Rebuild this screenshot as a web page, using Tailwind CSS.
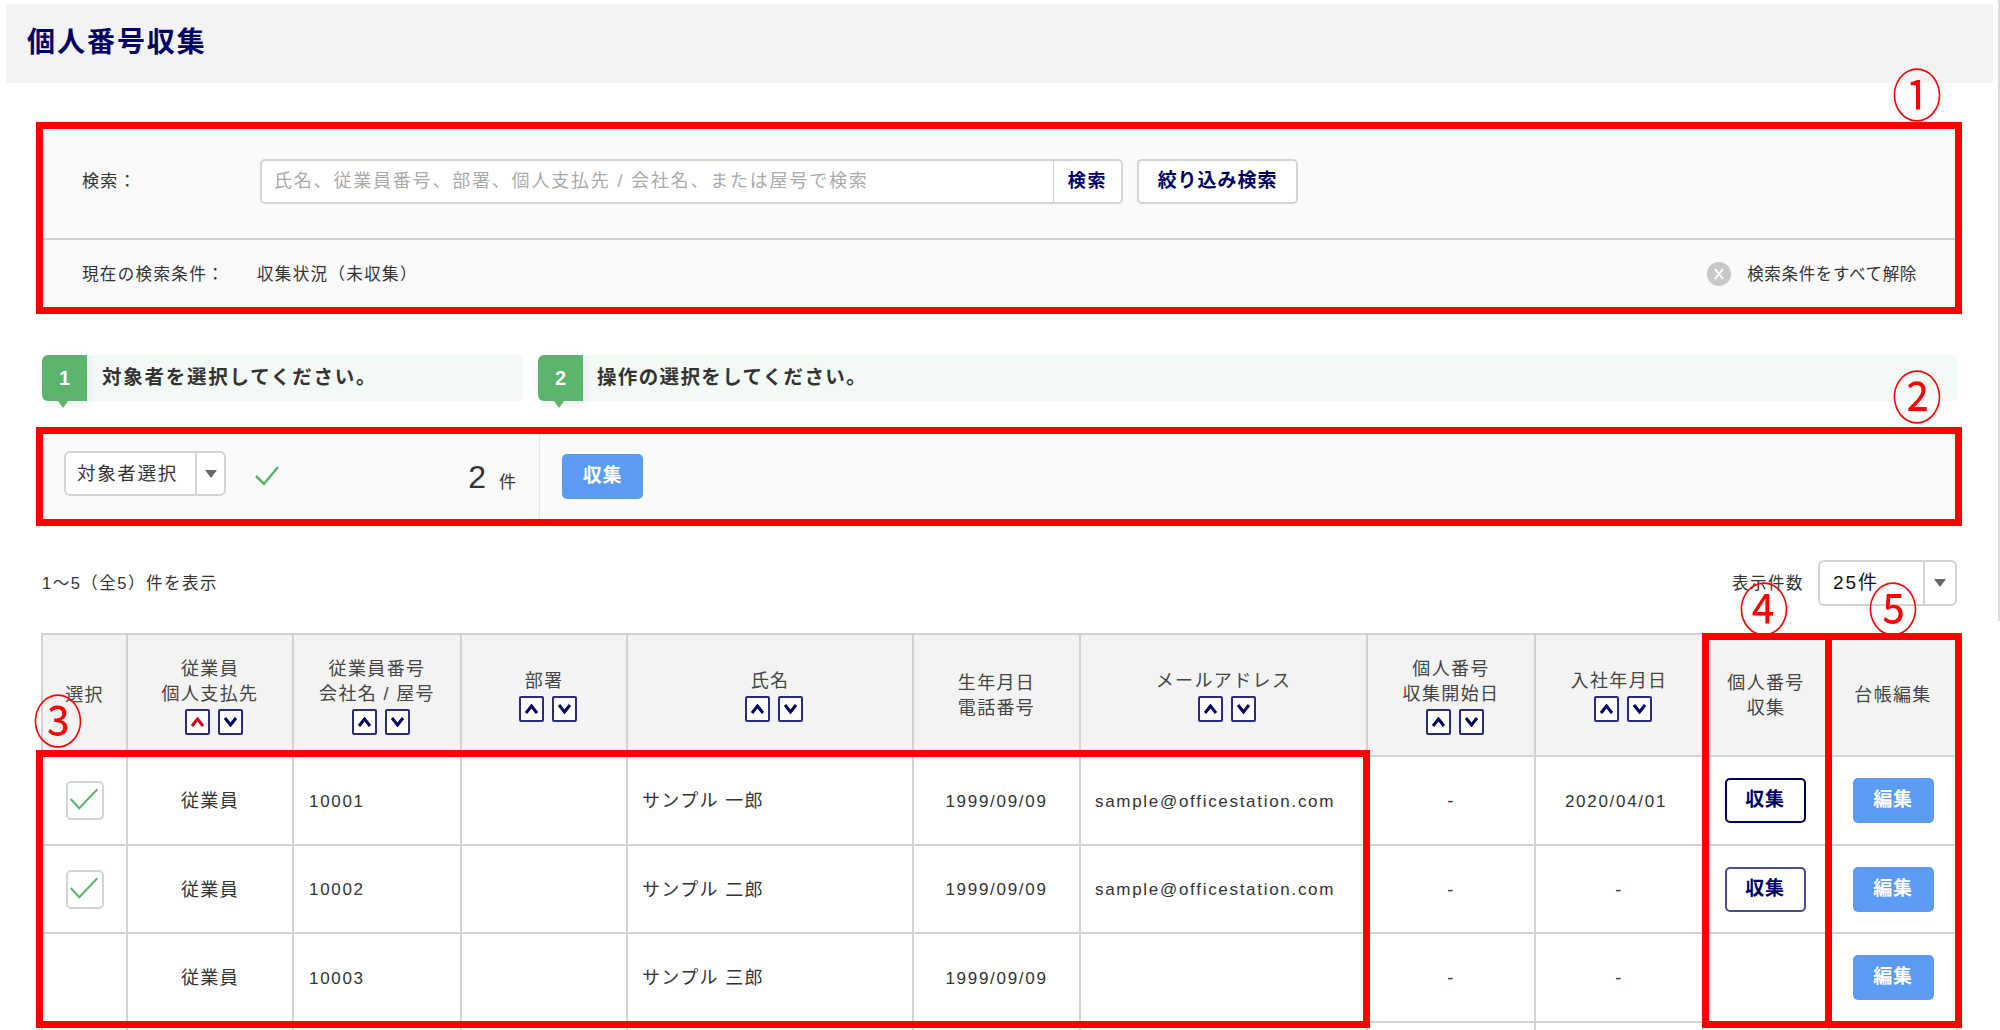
<!DOCTYPE html>
<html lang="ja">
<head>
<meta charset="UTF-8">
<title>個人番号収集</title>
<script src="https://cdn.jsdelivr.net/npm/@tailwindcss/browser@4"></script>
</head>
<body class="relative w-[2000px] h-[1030px] overflow-hidden bg-white text-[#333] font-['Liberation_Sans','Noto_Sans_CJK_JP',sans-serif] text-[17px] tracking-[0.08em]">

<!-- page title -->
<div class="ml-[6px] mt-[4px] w-[1987px] h-[79px] bg-[#f3f3f3] flex items-center pl-[21px] pb-[2px]">
  <h1 class="text-[28px] font-bold text-[#000066] tracking-[0.07em]">個人番号収集</h1>
</div>

<div class="ml-[42px] w-[1915px]">

  <!-- search -->
  <div class="mt-[42px] bg-[#fafafa]">
    <div class="h-[113px] flex items-center pl-[40px] border-b-2 border-[#d0d0d0] box-content">
      <span class="w-[178px] text-[17px]">検索：</span>
      <div class="flex w-[863px] h-[45px] bg-white border-2 border-[#d4d4d4] rounded-[5px]">
        <div class="flex-1 flex items-center pl-[12px] text-[#aaa] text-[18px] tracking-[0.1em]">氏名、従業員番号、部署、個人支払先 / 会社名、または屋号で検索</div>
        <div class="w-[68px] flex items-center justify-center border-l border-[#d4d4d4] text-[#000066] font-bold text-[18px] tracking-[0.1em]">検索</div>
      </div>
      <div class="ml-[14px] w-[161px] h-[45px] flex items-center justify-center bg-white border-2 border-[#d4d4d4] rounded-[5px] text-[#000066] font-bold text-[19px] tracking-[0.05em]">絞り込み検索</div>
    </div>
    <div class="h-[68px] flex items-center pl-[40px] pr-[40px] text-[16.5px]">
      <span class="w-[175px]">現在の検索条件：</span>
      <span>収集状況（未収集）</span>
      <span class="ml-auto flex items-center gap-[16px] tracking-[0.04em]">
        <svg width="24" height="24" viewBox="0 0 24 24"><circle cx="12" cy="12" r="12" fill="#c8c8c8"/><path d="M8 7l8 10M16 7L8 17" stroke="#fff" stroke-width="2" fill="none"/></svg>
        検索条件をすべて解除
      </span>
    </div>
  </div>

  <!-- steps -->
  <div class="mt-[47px] flex gap-[15px] h-[46px]">
    <div class="relative w-[481px] flex items-center bg-[#f3f9f4] rounded-[6px]">
      <div class="relative w-[45px] h-[46px] flex items-center justify-center bg-[#5cb56c] rounded-l-[6px] text-white font-bold text-[20px] tracking-normal shadow-[2px_3px_8px_rgba(0,0,0,0.08)]">1
        <span class="absolute left-[16px] top-[46px] w-0 h-0 border-x-[5.5px] border-x-transparent border-t-[7px] border-t-[#5cb56c]"></span>
      </div>
      <span class="ml-[15px] font-bold text-[19.5px] tracking-[0.09em]">対象者を選択してください。</span>
    </div>
    <div class="relative flex-1 flex items-center bg-[#f3f9f4] rounded-[6px]">
      <div class="relative w-[45px] h-[46px] flex items-center justify-center bg-[#5cb56c] rounded-l-[6px] text-white font-bold text-[20px] tracking-normal shadow-[2px_3px_8px_rgba(0,0,0,0.08)]">2
        <span class="absolute left-[16px] top-[46px] w-0 h-0 border-x-[5.5px] border-x-transparent border-t-[7px] border-t-[#5cb56c]"></span>
      </div>
      <span class="ml-[14px] font-bold text-[19.5px] tracking-[0.07em]">操作の選択をしてください。</span>
    </div>
  </div>

  <!-- selection bar -->
  <div class="mt-[29px] h-[93px] flex bg-[#fafafa]">
    <div class="w-[498px] flex items-center pl-[22px] pr-[23px] border-r border-[#e4e4e4]">
      <div class="flex h-[45px] w-[162px] -mt-[6px] bg-white border-2 border-[#d4d4d4] rounded-[6px]">
        <div class="w-[129px] flex items-center pl-[11px] text-[18.5px] tracking-[0.09em]">対象者選択</div>
        <div class="flex-1 flex items-center justify-center border-l-2 border-[#d4d4d4]">
          <svg width="12" height="8" viewBox="0 0 12 8"><path d="M0 0h12L6 8z" fill="#666"/></svg>
        </div>
      </div>
      <svg class="ml-[28px] -mt-[4px]" width="26" height="22" viewBox="0 0 26 22"><path d="M2 12l8 8L24 3" stroke="#5cb56c" stroke-width="2.5" fill="none"/></svg>
      <span class="ml-auto text-[32px] tracking-normal">2</span>
      <span class="ml-[13px] mt-[13px] text-[17px] tracking-normal">件</span>
    </div>
    <div class="flex items-center pl-[22px]">
      <div class="w-[81px] h-[45px] flex items-center justify-center bg-[#5b9bf3] rounded-[5px] text-white font-bold text-[19px] tracking-[0.04em]">収集</div>
    </div>
  </div>

  <!-- list info -->
  <div class="mt-[37px] h-[46px] flex items-center text-[16.5px] tracking-[0.09em]">
    <span>1～5（全5）件を表示</span>
    <span class="ml-auto mr-[14px]">表示件数</span>
    <div class="flex w-[139px] h-[46px] bg-white border-2 border-[#d4d4d4] rounded-[6px] text-[19px] text-[#111]">
      <div class="w-[103px] flex items-center pl-[13px] tracking-[0.1em]">25件</div>
      <div class="flex-1 flex items-center justify-center border-l-2 border-[#d4d4d4]">
        <svg width="12" height="8" viewBox="0 0 12 8"><path d="M0 0h12L6 8z" fill="#666"/></svg>
      </div>
    </div>
  </div>

  <!-- table -->
  <table class="mt-[27px] -ml-[1px] w-[1915px] table-fixed border-collapse text-[18px] [&_td]:border-2 [&_td]:border-[#d2d2d2] [&_td]:pt-[2px] [&_th]:border-2 [&_th]:border-[#d2d2d2] [&_th]:bg-[#f3f3f3] [&_th]:font-normal [&_th]:text-[#444] [&_th]:leading-[25px] [&_th]:align-middle [&_th]:pt-[1px]">
    <colgroup>
      <col class="w-[85px]"><col class="w-[166px]"><col class="w-[168px]"><col class="w-[166px]"><col class="w-[286px]"><col class="w-[167px]"><col class="w-[287px]"><col class="w-[168px]"><col class="w-[168px]"><col class="w-[126px]"><col class="w-[128px]">
    </colgroup>
    <thead>
      <tr class="h-[122px]">
        <th>選択</th>
        <th>従業員<br>個人支払先
          <div class="mt-[2px] ml-[7px] flex justify-center gap-[8px]">
            <span class="w-[25px] h-[26px] flex items-center justify-center border-2 border-[#2a2a80] bg-white rounded-[2px]"><svg width="15" height="10" viewBox="0 0 15 10"><path d="M2 9l5.5-7L13 9" stroke="#d0021b" stroke-width="3" fill="none"/></svg></span>
            <span class="w-[25px] h-[26px] flex items-center justify-center border-2 border-[#2a2a80] bg-white rounded-[2px]"><svg width="15" height="10" viewBox="0 0 15 10"><path d="M2 1l5.5 7L13 1" stroke="#000066" stroke-width="3" fill="none"/></svg></span>
          </div>
        </th>
        <th>従業員番号<br>会社名 / 屋号
          <div class="mt-[2px] ml-[7px] flex justify-center gap-[8px]">
            <span class="w-[25px] h-[26px] flex items-center justify-center border-2 border-[#2a2a80] bg-white rounded-[2px]"><svg width="15" height="10" viewBox="0 0 15 10"><path d="M2 9l5.5-7L13 9" stroke="#000066" stroke-width="3" fill="none"/></svg></span>
            <span class="w-[25px] h-[26px] flex items-center justify-center border-2 border-[#2a2a80] bg-white rounded-[2px]"><svg width="15" height="10" viewBox="0 0 15 10"><path d="M2 1l5.5 7L13 1" stroke="#000066" stroke-width="3" fill="none"/></svg></span>
          </div>
        </th>
        <th>部署
          <div class="mt-[2px] ml-[7px] flex justify-center gap-[8px]">
            <span class="w-[25px] h-[26px] flex items-center justify-center border-2 border-[#2a2a80] bg-white rounded-[2px]"><svg width="15" height="10" viewBox="0 0 15 10"><path d="M2 9l5.5-7L13 9" stroke="#000066" stroke-width="3" fill="none"/></svg></span>
            <span class="w-[25px] h-[26px] flex items-center justify-center border-2 border-[#2a2a80] bg-white rounded-[2px]"><svg width="15" height="10" viewBox="0 0 15 10"><path d="M2 1l5.5 7L13 1" stroke="#000066" stroke-width="3" fill="none"/></svg></span>
          </div>
        </th>
        <th>氏名
          <div class="mt-[2px] ml-[7px] flex justify-center gap-[8px]">
            <span class="w-[25px] h-[26px] flex items-center justify-center border-2 border-[#2a2a80] bg-white rounded-[2px]"><svg width="15" height="10" viewBox="0 0 15 10"><path d="M2 9l5.5-7L13 9" stroke="#000066" stroke-width="3" fill="none"/></svg></span>
            <span class="w-[25px] h-[26px] flex items-center justify-center border-2 border-[#2a2a80] bg-white rounded-[2px]"><svg width="15" height="10" viewBox="0 0 15 10"><path d="M2 1l5.5 7L13 1" stroke="#000066" stroke-width="3" fill="none"/></svg></span>
          </div>
        </th>
        <th>生年月日<br>電話番号</th>
        <th>メールアドレス
          <div class="mt-[2px] ml-[7px] flex justify-center gap-[8px]">
            <span class="w-[25px] h-[26px] flex items-center justify-center border-2 border-[#2a2a80] bg-white rounded-[2px]"><svg width="15" height="10" viewBox="0 0 15 10"><path d="M2 9l5.5-7L13 9" stroke="#000066" stroke-width="3" fill="none"/></svg></span>
            <span class="w-[25px] h-[26px] flex items-center justify-center border-2 border-[#2a2a80] bg-white rounded-[2px]"><svg width="15" height="10" viewBox="0 0 15 10"><path d="M2 1l5.5 7L13 1" stroke="#000066" stroke-width="3" fill="none"/></svg></span>
          </div>
        </th>
        <th>個人番号<br>収集開始日
          <div class="mt-[2px] ml-[7px] flex justify-center gap-[8px]">
            <span class="w-[25px] h-[26px] flex items-center justify-center border-2 border-[#2a2a80] bg-white rounded-[2px]"><svg width="15" height="10" viewBox="0 0 15 10"><path d="M2 9l5.5-7L13 9" stroke="#000066" stroke-width="3" fill="none"/></svg></span>
            <span class="w-[25px] h-[26px] flex items-center justify-center border-2 border-[#2a2a80] bg-white rounded-[2px]"><svg width="15" height="10" viewBox="0 0 15 10"><path d="M2 1l5.5 7L13 1" stroke="#000066" stroke-width="3" fill="none"/></svg></span>
          </div>
        </th>
        <th>入社年月日
          <div class="mt-[2px] ml-[7px] flex justify-center gap-[8px]">
            <span class="w-[25px] h-[26px] flex items-center justify-center border-2 border-[#2a2a80] bg-white rounded-[2px]"><svg width="15" height="10" viewBox="0 0 15 10"><path d="M2 9l5.5-7L13 9" stroke="#000066" stroke-width="3" fill="none"/></svg></span>
            <span class="w-[25px] h-[26px] flex items-center justify-center border-2 border-[#2a2a80] bg-white rounded-[2px]"><svg width="15" height="10" viewBox="0 0 15 10"><path d="M2 1l5.5 7L13 1" stroke="#000066" stroke-width="3" fill="none"/></svg></span>
          </div>
        </th>
        <th>個人番号<br>収集</th>
        <th>台帳編集</th>
      </tr>
    </thead>
    <tbody>
      <tr class="h-[89px]">
        <td><div class="mx-auto -mt-[2px] w-[38px] h-[39px] border-2 border-[#d4d4d4] rounded-[5px]"><svg width="34" height="35" viewBox="0 0 34 35"><path d="M2.7 16l8.6 9.3 18-19" stroke="#5cb56c" stroke-width="2" fill="none"/></svg></div></td>
        <td class="text-center">従業員</td>
        <td class="pl-[15px] text-[17px] tracking-[0.1em]">10001</td>
        <td></td>
        <td class="pl-[14px]">サンプル 一郎</td>
        <td class="text-center text-[17px] tracking-[0.1em]">1999/09/09</td>
        <td class="pl-[14px] text-[17px] tracking-[0.1em]">sample@officestation.com</td>
        <td class="text-center">-</td>
        <td class="text-center pr-[6px] text-[17px] tracking-[0.1em]">2020/04/01</td>
        <td class="pr-[2px]"><div class="mx-auto -mt-[2px] w-[81px] h-[45px] flex items-center justify-center border-2 border-[#000066] rounded-[5px] bg-white text-[#000066] font-bold text-[19px] tracking-[0.04em]">収集</div></td>
        <td><div class="mx-auto -mt-[2px] w-[81px] h-[45px] flex items-center justify-center rounded-[5px] bg-[#5b9bf3] text-white font-bold text-[19px] tracking-[0.04em]">編集</div></td>
      </tr>
      <tr class="h-[88px]">
        <td><div class="mx-auto -mt-[2px] w-[38px] h-[39px] border-2 border-[#d4d4d4] rounded-[5px]"><svg width="34" height="35" viewBox="0 0 34 35"><path d="M2.7 16l8.6 9.3 18-19" stroke="#5cb56c" stroke-width="2" fill="none"/></svg></div></td>
        <td class="text-center">従業員</td>
        <td class="pl-[15px] text-[17px] tracking-[0.1em]">10002</td>
        <td></td>
        <td class="pl-[14px]">サンプル 二郎</td>
        <td class="text-center text-[17px] tracking-[0.1em]">1999/09/09</td>
        <td class="pl-[14px] text-[17px] tracking-[0.1em]">sample@officestation.com</td>
        <td class="text-center">-</td>
        <td class="text-center">-</td>
        <td class="pr-[2px]"><div class="mx-auto -mt-[2px] w-[81px] h-[45px] flex items-center justify-center border-2 border-[#4a4a96] rounded-[5px] bg-white text-[#000066] font-bold text-[19px] tracking-[0.04em]">収集</div></td>
        <td><div class="mx-auto -mt-[2px] w-[81px] h-[45px] flex items-center justify-center rounded-[5px] bg-[#5b9bf3] text-white font-bold text-[19px] tracking-[0.04em]">編集</div></td>
      </tr>
      <tr class="h-[89px]">
        <td></td>
        <td class="text-center">従業員</td>
        <td class="pl-[15px] text-[17px] tracking-[0.1em]">10003</td>
        <td></td>
        <td class="pl-[14px]">サンプル 三郎</td>
        <td class="text-center text-[17px] tracking-[0.1em]">1999/09/09</td>
        <td></td>
        <td class="text-center">-</td>
        <td class="text-center">-</td>
        <td></td>
        <td><div class="mx-auto -mt-[2px] w-[81px] h-[45px] flex items-center justify-center rounded-[5px] bg-[#5b9bf3] text-white font-bold text-[19px] tracking-[0.04em]">編集</div></td>
      </tr>
      <tr class="h-[60px]"><td></td><td></td><td></td><td></td><td></td><td></td><td></td><td></td><td></td><td></td><td></td></tr>
    </tbody>
  </table>
</div>

<!-- scrollbar edge -->
<div class="absolute left-[1998px] top-0 w-[2px] h-[621px] bg-[#dcdcdc]"></div>

<!-- red annotation frames drawn over the screenshot -->
<div class="absolute left-[36px] top-[122px] w-[1926px] h-[192px] border-[7px] border-[#ff0000]"></div>
<div class="absolute left-[36px] top-[427px] w-[1926px] h-[99px] border-[7px] border-[#ff0000]"></div>
<div class="absolute left-[36px] top-[750px] w-[1334px] h-[278px] border-[7px] border-[#ff0000]"></div>
<div class="absolute left-[1702px] top-[633px] w-[130px] h-[395px] border-[7px] border-[#ff0000]"></div>
<div class="absolute left-[1825px] top-[633px] w-[137px] h-[395px] border-[7px] border-[#ff0000]"></div>

<span class="absolute left-[1887px] top-[61px] w-[60px] h-[60px] flex items-center justify-center font-['Noto_Sans_CJK_JP'] text-[#ff0000] text-[50px] leading-none tracking-normal scale-y-[1.12]">①</span>
<span class="absolute left-[1887px] top-[363px] w-[60px] h-[60px] flex items-center justify-center font-['Noto_Sans_CJK_JP'] text-[#ff0000] text-[50px] leading-none tracking-normal scale-y-[1.12]">②</span>
<span class="absolute left-[28px] top-[687px] w-[60px] h-[60px] flex items-center justify-center font-['Noto_Sans_CJK_JP'] text-[#ff0000] text-[50px] leading-none tracking-normal scale-y-[1.12]">③</span>
<span class="absolute left-[1734px] top-[575px] w-[60px] h-[60px] flex items-center justify-center font-['Noto_Sans_CJK_JP'] text-[#ff0000] text-[50px] leading-none tracking-normal scale-y-[1.12]">④</span>
<span class="absolute left-[1863px] top-[575px] w-[60px] h-[60px] flex items-center justify-center font-['Noto_Sans_CJK_JP'] text-[#ff0000] text-[50px] leading-none tracking-normal scale-y-[1.12]">⑤</span>

</body>
</html>
